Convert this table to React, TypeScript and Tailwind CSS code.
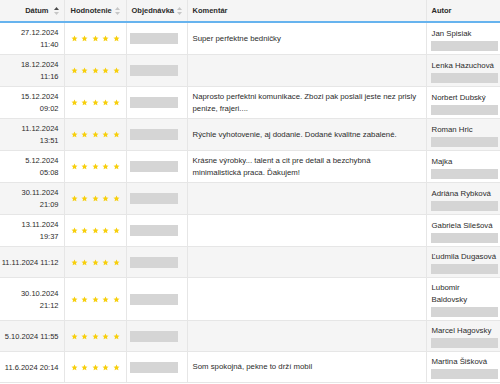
import React from 'react'

interface Recenzia {
  datum: string
  cas: string
  zalom: boolean
  komentar: string[]
  autor: string[]
}

const recenzie: Recenzia[] = [
  { datum: '27.12.2024', cas: '11:40', zalom: true, komentar: ['Super perfektne bedničky'], autor: ['Jan Spisiak'] },
  { datum: '18.12.2024', cas: '11:16', zalom: true, komentar: [], autor: ['Lenka Hazuchová'] },
  {
    datum: '15.12.2024',
    cas: '09:02',
    zalom: true,
    komentar: ['Naprosto perfektni komunikace. Zbozi pak poslali jeste nez prisly', 'penize, frajeri....'],
    autor: ['Norbert Dubský'],
  },
  {
    datum: '11.12.2024',
    cas: '13:51',
    zalom: true,
    komentar: ['Rýchle vyhotovenie, aj dodanie. Dodané kvalitne zabalené.'],
    autor: ['Roman Hric'],
  },
  {
    datum: '5.12.2024',
    cas: '05:08',
    zalom: true,
    komentar: ['Krásne výrobky... talent a cit pre detail a bezchybná', 'minimalistická praca. Ďakujem!'],
    autor: ['Majka'],
  },
  { datum: '30.11.2024', cas: '21:09', zalom: true, komentar: [], autor: ['Adriána Rybková'] },
  { datum: '13.11.2024', cas: '19:37', zalom: true, komentar: [], autor: ['Gabriela Silešová'] },
  { datum: '11.11.2024', cas: '11:12', zalom: false, komentar: [], autor: ['Ľudmila Dugasová'] },
  { datum: '30.10.2024', cas: '21:12', zalom: true, komentar: [], autor: ['Lubomir', 'Baldovsky'] },
  { datum: '5.10.2024', cas: '11:55', zalom: false, komentar: [], autor: ['Marcel Hagovsky'] },
  { datum: '11.6.2024', cas: '20:14', zalom: false, komentar: ['Som spokojná, pekne to drží mobil'], autor: ['Martina Šišková'] },
]

function SortIcon({ active = false }: { active?: boolean }) {
  return (
    <svg width="5" height="8" viewBox="0 0 5 8" className="shrink-0">
      <polygon points="2.5,0 5,3 0,3" fill={active ? '#4a4a4a' : '#c6c6c6'} />
      <polygon points="0,5 5,5 2.5,8" fill="#c6c6c6" />
    </svg>
  )
}

function Star() {
  return (
    <svg width="7" height="7" viewBox="0 0 24 24">
      <polygon
        points="12,1.5 15.1,8.3 22.5,9.1 17,14.1 18.5,21.5 12,17.8 5.5,21.5 7,14.1 1.5,9.1 8.9,8.3"
        fill="#f7cf0c"
      />
    </svg>
  )
}

export default function App() {
  return (
    <div className="w-[500px] h-[384px] overflow-hidden bg-white text-[#2b2b2b] font-['Liberation_Sans',Arial,sans-serif] text-[7.8px] leading-[12px]">
      <table className="w-[500px] table-fixed border-collapse">
        <colgroup>
          <col className="w-[64px]" />
          <col className="w-[62px]" />
          <col className="w-[61px]" />
          <col className="w-[239px]" />
          <col className="w-[74px]" />
        </colgroup>
        <thead className="bg-[#f5f5f5]">
          <tr className="h-[22px] border-b-2 border-[#66b3ee]">
            <th className="pr-[5px] text-right font-bold border-r border-[#e6e6e6]">
              <div className="flex items-center justify-end gap-[5px] text-[7.5px]">
                <span>Dátum</span>
                <SortIcon active />
              </div>
            </th>
            <th className="px-[6px] text-left font-bold border-r border-[#e6e6e6]">
              <div className="flex items-center justify-between text-[7.5px]">
                <span>Hodnotenie</span>
                <SortIcon />
              </div>
            </th>
            <th className="px-[5px] text-left font-bold border-r border-[#e6e6e6]">
              <div className="flex items-center justify-between text-[7.5px]">
                <span>Objednávka</span>
                <SortIcon />
              </div>
            </th>
            <th className="px-[5px] text-left font-bold border-r border-[#e6e6e6] text-[7.5px]">Komentár</th>
            <th className="px-[5px] text-left font-bold text-[7.5px]">Autor</th>
          </tr>
        </thead>
        <tbody>
          {recenzie.map((r, i) => (
            <tr key={i} className={`border-b border-[#e6e6e6] ${i % 2 === 1 ? 'bg-[#f5f5f5]' : 'bg-white'}`}>
              <td className="pt-[4px] pb-[3px] pr-[5px] text-right text-[7.5px] align-middle border-r border-[#e6e6e6] whitespace-nowrap">
                {r.zalom ? (
                  <>
                    <div>{r.datum}</div>
                    <div>{r.cas}</div>
                  </>
                ) : (
                  <div>
                    {r.datum} {r.cas}
                  </div>
                )}
              </td>
              <td className="px-[6px] align-middle border-r border-[#e6e6e6]">
                <div className="flex gap-[3.5px]">
                  {[0, 1, 2, 3, 4].map((s) => (
                    <Star key={s} />
                  ))}
                </div>
              </td>
              <td className="pl-[3px] align-middle border-r border-[#e6e6e6]">
                <div className="w-[48px] h-[11px] bg-[#d5d5d5]" />
              </td>
              <td className="px-[5px] align-middle border-r border-[#e6e6e6] whitespace-nowrap">
                {r.komentar.map((k, j) => (
                  <div key={j}>{k}</div>
                ))}
              </td>
              <td className="pt-[4px] pb-[3px] px-[4px] align-middle">
                {r.autor.map((a, j) => (
                  <div key={j} className="pl-[1px] whitespace-nowrap">
                    {a}
                  </div>
                ))}
                <div className="mt-[1px] w-[67px] h-[10px] bg-[#d5d5d5]" />
              </td>
            </tr>
          ))}
        </tbody>
      </table>
    </div>
  )
}
